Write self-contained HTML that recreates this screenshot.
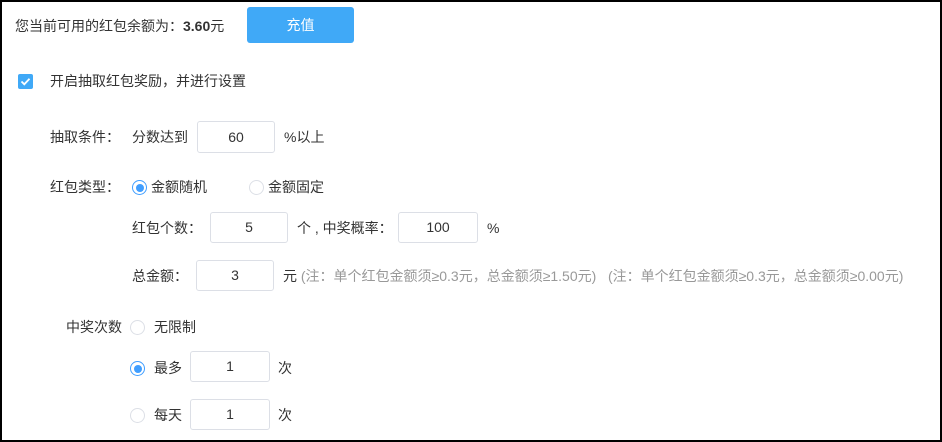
<!DOCTYPE html>
<html><head><meta charset="utf-8"><style>
html,body{margin:0;padding:0}
body{width:942px;height:442px;position:relative;overflow:hidden;background:#fff;font-family:"Liberation Sans","Noto Sans CJK SC",sans-serif;font-size:14px;color:#333}
.frame{position:absolute;left:0;top:0;width:938px;height:438px;border:2px solid #000}
.t{position:absolute;line-height:16px;white-space:nowrap}
.in{position:absolute;border:1px solid #dcdfe6;border-radius:3px;box-sizing:border-box;text-align:center;font-size:14px;color:#333}
.r{position:absolute;width:15px;height:15px;border:1px solid #dcdfe6;border-radius:50%;box-sizing:border-box;background:#fff}
.r.on{border-color:#409eff}
.r.on:after{content:"";position:absolute;left:2.5px;top:2.5px;width:8px;height:8px;border-radius:50%;background:#409eff}
.g{color:#999}
</style></head><body>
<div class="frame"></div>
<div class="t" style="left:15px;top:18px">您当前可用的红包余额为：<b>3.60</b>元</div>
<div style="position:absolute;left:247px;top:7px;width:107px;height:36px;background:#40a9f7;border-radius:3px;color:#fff;font-size:14px;line-height:36px;text-align:center">充值</div>
<div style="position:absolute;left:18px;top:74px;width:15px;height:15px;background:#40a9f7;border-radius:2px"><svg width="15" height="15"><path d="M3.5 7.5 L6.3 10.3 L11.5 4.8" stroke="#fff" stroke-width="1.8" fill="none"/></svg></div>
<div class="t" style="left:50px;top:73px">开启抽取红包奖励，并进行设置</div>

<div class="t" style="left:50px;top:129px">抽取条件：</div>
<div class="t" style="left:132px;top:129px">分数达到</div>
<div class="in" style="left:197px;top:121px;width:78px;height:32px;line-height:30px">60</div>
<div class="t" style="left:284px;top:129px">%以上</div>

<div class="t" style="left:50px;top:179px">红包类型：</div>
<div class="r on" style="left:132px;top:180px"></div>
<div class="t" style="left:151px;top:179px">金额随机</div>
<div class="r" style="left:249px;top:180px"></div>
<div class="t" style="left:268px;top:179px">金额固定</div>

<div class="t" style="left:132px;top:220px">红包个数：</div>
<div class="in" style="left:210px;top:212px;width:78px;height:31px;line-height:29px">5</div>
<div class="t" style="left:297px;top:220px">个 , 中奖概率：</div>
<div class="in" style="left:398px;top:212px;width:80px;height:31px;line-height:29px">100</div>
<div class="t" style="left:487px;top:220px">%</div>

<div class="t" style="left:132px;top:268px">总金额：</div>
<div class="in" style="left:196px;top:260px;width:78px;height:31px;line-height:29px">3</div>
<div class="t" style="left:283px;top:268px">元 <span class="g">(注：单个红包金额须≥0.3元，总金额须≥1.50元)&nbsp;&nbsp;&nbsp;(注：单个红包金额须≥0.3元，总金额须≥0.00元)</span></div>

<div class="t" style="left:66px;top:319px">中奖次数</div>
<div class="r" style="left:130px;top:320px"></div>
<div class="t" style="left:154px;top:319px">无限制</div>

<div class="r on" style="left:130px;top:361px"></div>
<div class="t" style="left:154px;top:360px">最多</div>
<div class="in" style="left:190px;top:351px;width:80px;height:31px;line-height:29px">1</div>
<div class="t" style="left:278px;top:360px">次</div>

<div class="r" style="left:130px;top:408px"></div>
<div class="t" style="left:154px;top:407px">每天</div>
<div class="in" style="left:190px;top:399px;width:80px;height:31px;line-height:29px">1</div>
<div class="t" style="left:278px;top:407px">次</div>
</body></html>
